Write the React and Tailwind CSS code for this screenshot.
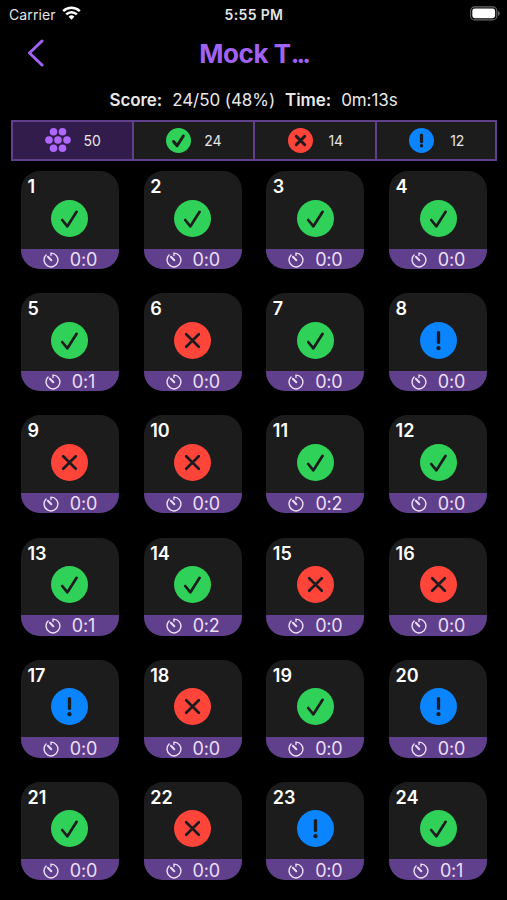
const QUESTIONS = [
  { status: 'correct', time: '0:0' },
  { status: 'correct', time: '0:0' },
  { status: 'correct', time: '0:0' },
  { status: 'correct', time: '0:0' },
  { status: 'correct', time: '0:1' },
  { status: 'wrong', time: '0:0' },
  { status: 'correct', time: '0:0' },
  { status: 'skipped', time: '0:0' },
  { status: 'wrong', time: '0:0' },
  { status: 'wrong', time: '0:0' },
  { status: 'correct', time: '0:2' },
  { status: 'correct', time: '0:0' },
  { status: 'correct', time: '0:1' },
  { status: 'correct', time: '0:2' },
  { status: 'wrong', time: '0:0' },
  { status: 'wrong', time: '0:0' },
  { status: 'skipped', time: '0:0' },
  { status: 'wrong', time: '0:0' },
  { status: 'correct', time: '0:0' },
  { status: 'skipped', time: '0:0' },
  { status: 'correct', time: '0:0' },
  { status: 'wrong', time: '0:0' },
  { status: 'skipped', time: '0:0' },
  { status: 'correct', time: '0:1' },
];

const STATUS_COLORS = {
  correct: '#30d158',
  wrong: '#ff453a',
  skipped: '#0a84ff',
};

function StatusIcon({ status, className, bold }) {
  const width = bold ? 4.4 : 2.7;
  return (
    <svg className={className} viewBox="0 0 37 37" fill="none" stroke="#1c1c1e" strokeWidth={width} strokeLinecap="round" strokeLinejoin="round">
      <circle cx="18.5" cy="18.5" r="18.5" fill={STATUS_COLORS[status]} stroke="none" />
      {status === 'correct' && <path d="M11.2 20l5.2 6.3L25.6 11.8" />}
      {status === 'wrong' && <path d="M12.2 12.2l12.6 12.6M24.8 12.2L12.2 24.8" />}
      {status === 'skipped' && (
        <>
          <path d="M18.5 10.6v9.8" strokeWidth={bold ? 4.8 : 3.3} />
          <circle cx="18.5" cy="26.2" r={bold ? 2.6 : 2.1} fill="#1c1c1e" stroke="none" />
        </>
      )}
    </svg>
  );
}

function HexDots() {
  return (
    <svg className="h-[26px] w-[26px] shrink-0" viewBox="0 0 26 26" fill="#af68ff">
      <circle cx="8.5" cy="4.7" r="3.8" />
      <circle cx="17.5" cy="4.7" r="3.8" />
      <circle cx="4" cy="13" r="3.8" />
      <circle cx="13" cy="13" r="3.8" />
      <circle cx="22" cy="13" r="3.8" />
      <circle cx="8.5" cy="21.3" r="3.8" />
      <circle cx="17.5" cy="21.3" r="3.8" />
    </svg>
  );
}

function TimerIcon() {
  return (
    <svg className="h-4 w-4 shrink-0" viewBox="0 0 16 16" fill="none" stroke="#ecdff8" strokeWidth="1.4" strokeLinecap="round">
      <path d="M8 3.6V1.1A6.9 6.9 0 1 1 3.1 3.1" />
      <path d="M4.9 4.8L8.3 8.2" strokeWidth="2" />
    </svg>
  );
}

function StatusBar() {
  return (
    <div className="grid h-7 grid-cols-3 items-center pr-[7px] pl-[9px] text-[14px] text-[#e4e4e4]">
      <div className="flex items-center gap-[6px]">
        <span className="tracking-[0.1px]">Carrier</span>
        <svg className="-mt-[2px] h-[14px] w-[19px]" viewBox="0 0 19 14" fill="none" stroke="#fff" strokeWidth="2.4">
          <path d="M1.2 5.2a11.8 11.8 0 0 1 16.6 0" />
          <path d="M4.2 8.4a7.5 7.5 0 0 1 10.6 0" />
          <path d="M9.5 13.8L6.6 10.8a4.1 4.1 0 0 1 5.8 0z" fill="#fff" stroke="none" />
        </svg>
      </div>
      <span className="-ml-px text-center font-semibold tracking-[0.35px]">5:55 PM</span>
      <div className="flex justify-end">
        <svg className="-mt-[2px] h-[15px] w-[30px]" viewBox="0 0 30 15" fill="none">
          <rect x=".6" y=".9" width="26.2" height="13" rx="4" stroke="#6b6b6b" strokeWidth="1.1" />
          <rect x="2.3" y="2.6" width="22.8" height="9.6" rx="2.4" fill="#fff" />
          <path d="M28 5v4.8c1-.4 1.7-1.3 1.7-2.4S29 5.4 28 5z" fill="#6b6b6b" />
        </svg>
      </div>
    </div>
  );
}

function Tab({ active, last, icon, count }) {
  return (
    <div
      className={`flex items-center justify-center border-y-2 border-l-2 border-[#603f8c] pl-px ${
        active ? 'bg-[#321c4c]' : 'bg-[#1c1c1c]'
      } ${last ? 'border-r-2' : ''}`}
    >
      <div className="flex w-[56px] items-center justify-between">
        <div className="flex w-[26px] justify-center">{icon}</div>
        <span className="text-[14px] tracking-[-0.1px] text-[#e6e6e6]">{count}</span>
      </div>
    </div>
  );
}

function QuestionCard({ number, status, time }) {
  return (
    <div className="flex h-[98px] flex-col overflow-hidden rounded-[19px] bg-[#1c1c1c]">
      <div className="flex h-[77.5px] shrink-0 flex-col px-[6.5px] pt-[5px]">
        <span className="h-[23.5px] text-[18px] leading-[22px] font-semibold text-white">{number}</span>
        <StatusIcon status={status} className="h-[37px] w-[37px] self-center" />
      </div>
      <div className="flex flex-1 items-center justify-center gap-[11px] bg-[#603f8c] pt-[2px]">
        <TimerIcon />
        <span className="text-[18px] leading-[18px] tracking-[-0.2px] text-[#ecdff8]">{time}</span>
      </div>
    </div>
  );
}

export default function App() {
  return (
    <div className="h-[900px] w-[507px] overflow-hidden bg-black font-['Inter','Liberation_Sans',sans-serif]">
      <StatusBar />

      {/* Header */}
      <div className="grid h-[50px] grid-cols-3 items-center">
        <svg className="ml-[27px] h-7 w-[18px]" viewBox="0 0 18 28" fill="none" stroke="#a163f5" strokeWidth="3" strokeLinecap="round" strokeLinejoin="round">
          <path d="M15 2L2.5 14L15 26" />
        </svg>
        <h1 className="text-center text-[26px] font-bold tracking-[-0.4px] whitespace-nowrap text-[#a163f5]">
          Mock T<span className="tracking-[-3px]">...</span>
        </h1>
      </div>

      {/* Score summary */}
      <div className="flex h-[42px] items-center justify-center gap-[10px] pt-[3px] text-[17px] tracking-[-0.07px] whitespace-pre text-[#e8e8e8]">
        <span className="font-semibold">Score:</span>
        <span>24/50 (48%)</span>
        <span className="font-semibold">Time:</span>
        <span>0m:13s</span>
      </div>

      {/* Filter tabs */}
      <div className="mr-[10px] ml-[11px] grid h-[40.5px] grid-cols-[120.5px_121px_122px_1fr]">
        <Tab active icon={<HexDots />} count={50} />
        <Tab icon={<StatusIcon status="correct" bold className="h-[25px] w-[25px]" />} count={24} />
        <Tab icon={<StatusIcon status="wrong" bold className="h-[25px] w-[25px]" />} count={14} />
        <Tab last icon={<StatusIcon status="skipped" bold className="h-[25px] w-[25px]" />} count={12} />
      </div>

      {/* Questions grid */}
      <div className="mt-[10.5px] mr-5 ml-[21px] grid grid-cols-4 gap-x-[24.7px] gap-y-[24.2px]">
        {QUESTIONS.map((q, i) => (
          <QuestionCard key={i} number={i + 1} status={q.status} time={q.time} />
        ))}
      </div>
    </div>
  );
}
